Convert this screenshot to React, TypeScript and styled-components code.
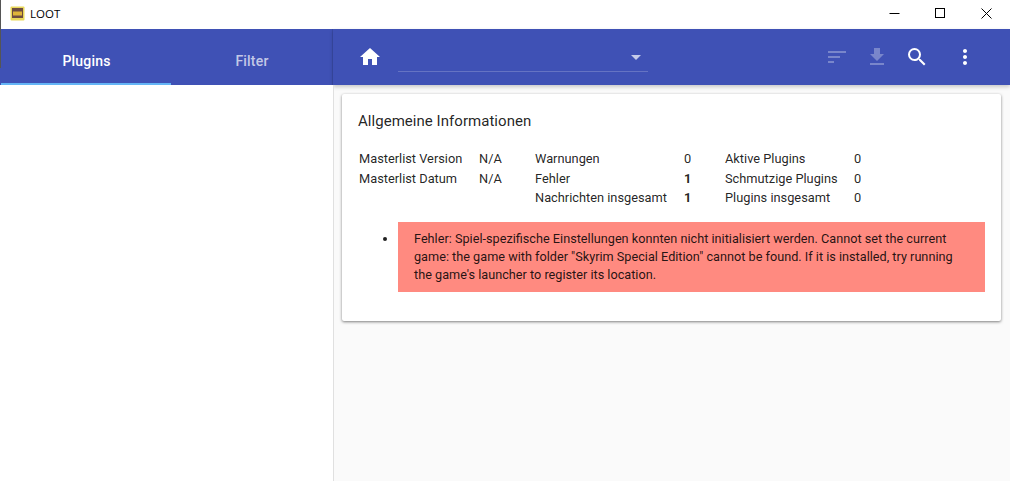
import { createGlobalStyle } from 'styled-components';
import styled from 'styled-components';

const GlobalStyle = createGlobalStyle`
  html, body {
    margin: 0;
    padding: 0;
    height: 100%;
    overflow: hidden;
  }
  #root {
    height: 100%;
  }
  * {
    box-sizing: border-box;
  }
`;

const Window = styled.div`
  width: 1010px;
  height: 481px;
  display: flex;
  flex-direction: column;
  background: #fff;
  font-family: 'Roboto', sans-serif;
  color: rgba(0, 0, 0, 0.87);
  overflow: hidden;
  position: relative;
  &::before {
    content: '';
    position: absolute;
    left: 0;
    top: 0;
    width: 1px;
    height: 68px;
    background: #555;
    z-index: 3;
  }
`;

const TitleBar = styled.div`
  height: 29px;
  flex: none;
  display: flex;
  align-items: center;
  padding: 0 1px 2px 10px;
  background: #fff;
  color: #000;
  font-family: 'Open Sans', sans-serif;
  font-size: 11.5px;
`;

const AppIcon = styled.svg`
  width: 15px;
  height: 15px;
  margin-right: 5px;
`;

const WindowButtons = styled.div`
  margin-left: auto;
  display: flex;
`;

const WindowButton = styled.div`
  width: 46px;
  height: 27px;
  display: flex;
  align-items: center;
  justify-content: center;
`;

const Header = styled.div`
  height: 56px;
  flex: none;
  display: flex;
  background: #3f51b5;
`;

const TabBar = styled.div`
  width: 333px;
  flex: none;
  display: grid;
  grid-template-columns: 170px 1fr;
  padding-left: 1px;
  border-right: 1px solid #394aa5;
`;

const Tab = styled.div<{ $active?: boolean }>`
  display: flex;
  align-items: center;
  justify-content: center;
  padding: 10px 0 0 1px;
  font-size: 14px;
  font-weight: 500;
  letter-spacing: 0.2px;
  color: ${(p) => (p.$active ? '#fff' : 'rgba(255, 255, 255, 0.7)')};
  border-bottom: 2px solid ${(p) => (p.$active ? '#64b5f6' : 'transparent')};
`;

const Toolbar = styled.div`
  flex: 1;
  display: flex;
  align-items: center;
  padding-left: 25px;
  position: relative;
  z-index: 1;
  box-shadow: 0 2px 4px rgba(0, 0, 0, 0.2);
`;

const ToolIcon = styled.svg<{ $disabled?: boolean }>`
  width: 24px;
  height: 24px;
  fill: #fff;
  opacity: ${(p) => (p.$disabled ? 0.3 : 1)};
`;

const GameSelect = styled.div`
  width: 250px;
  height: 30px;
  margin: 0 auto 0 16px;
  border-bottom: 1px solid rgba(255, 255, 255, 0.2);
  display: flex;
  align-items: center;
  justify-content: flex-end;
  padding: 2px 7px 0 0;
`;

const Caret = styled.div`
  width: 0;
  height: 0;
  border-left: 5px solid transparent;
  border-right: 5px solid transparent;
  border-top: 5px solid rgba(255, 255, 255, 0.7);
`;

const ToolGroup = styled.div`
  display: flex;
  gap: 16px;
  padding-right: 16px;
`;

const MenuIcon = styled(ToolIcon)`
  margin: 0 33px 0 8px;
`;

const Body = styled.div`
  flex: 1;
  display: flex;
  min-height: 0;
`;

const Sidebar = styled.div`
  width: 334px;
  flex: none;
  background: #fff;
  border-right: 1px solid #e0e0e0;
  position: relative;
  z-index: 2;
`;

const Main = styled.div`
  flex: 1;
  background: #fafafa;
  padding: 9px 9px 0 8px;
`;

const Card = styled.div`
  height: 227px;
  background: #fff;
  border-radius: 2px;
  box-shadow: 0 1px 3px rgba(0, 0, 0, 0.5);
  padding: 17px 16px 0;
`;

const CardTitle = styled.h1`
  margin: 0 0 18px;
  font-size: 15px;
  font-weight: 400;
  line-height: 20px;
  letter-spacing: 0.04px;
`;

const Summary = styled.div`
  display: grid;
  grid-template-columns: 120px 56px 149px 41px 129px 21px;
  grid-auto-rows: 19.6px;
  font-size: 12.8px;
  line-height: 19.6px;
  padding-left: 1px;
`;

const Cell = styled.div<{ $bold?: boolean }>`
  font-weight: ${(p) => (p.$bold ? 700 : 400)};
  white-space: nowrap;
`;

const MessageList = styled.ul`
  margin: 14px 0 0;
  padding: 0 0 0 40px;
`;

const Message = styled.li`
  background: #ff8a80;
  padding: 8px 16px;
  font-size: 12.7px;
  line-height: 18px;
`;

export default function App() {
  return (
    <Window>
      <GlobalStyle />
      <TitleBar>
        <AppIcon viewBox="0 0 15 15">
          <rect x="0.5" y="0.5" width="14" height="14" rx="1" fill="#e9d85a" />
          <rect x="2" y="2" width="11" height="11" fill="#6d4c41" />
          <rect x="3" y="5.5" width="9" height="4" fill="#e0b53a" />
          <rect x="2" y="12" width="12" height="1.5" fill="#e9d85a" />
        </AppIcon>
        LOOT
        <WindowButtons>
          <WindowButton>
            <svg width="11" height="11" viewBox="0 0 11 11"><path d="M0.5 5.5h10" stroke="#000" /></svg>
          </WindowButton>
          <WindowButton>
            <svg width="11" height="11" viewBox="0 0 11 11"><rect x="0.5" y="0.5" width="9" height="9" fill="none" stroke="#000" /></svg>
          </WindowButton>
          <WindowButton>
            <svg width="11" height="11" viewBox="0 0 11 11"><path d="M0.5 0.5l10 10M10.5 0.5l-10 10" stroke="#000" /></svg>
          </WindowButton>
        </WindowButtons>
      </TitleBar>
      <Header>
        <TabBar>
          <Tab $active>Plugins</Tab>
          <Tab>Filter</Tab>
        </TabBar>
        <Toolbar>
          <ToolIcon viewBox="0 0 24 24"><path d="M10 20v-6h4v6h5v-8h3L12 3 2 12h3v8z" /></ToolIcon>
          <GameSelect><Caret /></GameSelect>
          <ToolGroup>
            <ToolIcon $disabled viewBox="0 0 24 24"><path d="M3 18h6v-2H3v2zM3 6v2h18V6H3zm0 7h12v-2H3v2z" /></ToolIcon>
            <ToolIcon $disabled viewBox="0 0 24 24"><path d="M19 9h-4V3H9v6H5l7 7 7-7zM5 18v2h14v-2H5z" /></ToolIcon>
            <ToolIcon viewBox="0 0 24 24"><path d="M15.5 14h-.79l-.28-.27A6.47 6.47 0 0 0 16 9.5 6.5 6.5 0 1 0 9.5 16c1.61 0 3.09-.59 4.23-1.57l.27.28v.79l5 4.99L20.49 19l-4.99-5zm-6 0C7.01 14 5 11.99 5 9.5S7.01 5 9.5 5 14 7.01 14 9.5 11.99 14 9.5 14z" /></ToolIcon>
          </ToolGroup>
          <MenuIcon viewBox="0 0 24 24"><path d="M12 8c1.1 0 2-.9 2-2s-.9-2-2-2-2 .9-2 2 .9 2 2 2zm0 2c-1.1 0-2 .9-2 2s.9 2 2 2 2-.9 2-2-.9-2-2-2zm0 6c-1.1 0-2 .9-2 2s.9 2 2 2 2-.9 2-2-.9-2-2-2z" /></MenuIcon>
        </Toolbar>
      </Header>
      <Body>
        <Sidebar />
        <Main>
          <Card>
            <CardTitle>Allgemeine Informationen</CardTitle>
            <Summary>
              <Cell>Masterlist Version</Cell>
              <Cell>N/A</Cell>
              <Cell>Warnungen</Cell>
              <Cell>0</Cell>
              <Cell>Aktive Plugins</Cell>
              <Cell>0</Cell>
              <Cell>Masterlist Datum</Cell>
              <Cell>N/A</Cell>
              <Cell>Fehler</Cell>
              <Cell $bold>1</Cell>
              <Cell>Schmutzige Plugins</Cell>
              <Cell>0</Cell>
              <Cell />
              <Cell />
              <Cell>Nachrichten insgesamt</Cell>
              <Cell $bold>1</Cell>
              <Cell>Plugins insgesamt</Cell>
              <Cell>0</Cell>
            </Summary>
            <MessageList>
              <Message>
                Fehler: Spiel-spezifische Einstellungen konnten nicht initialisiert werden. Cannot set the current game: the game with folder "Skyrim Special Edition" cannot be found. If it is installed, try running the game's launcher to register its location.
              </Message>
            </MessageList>
          </Card>
        </Main>
      </Body>
    </Window>
  );
}
